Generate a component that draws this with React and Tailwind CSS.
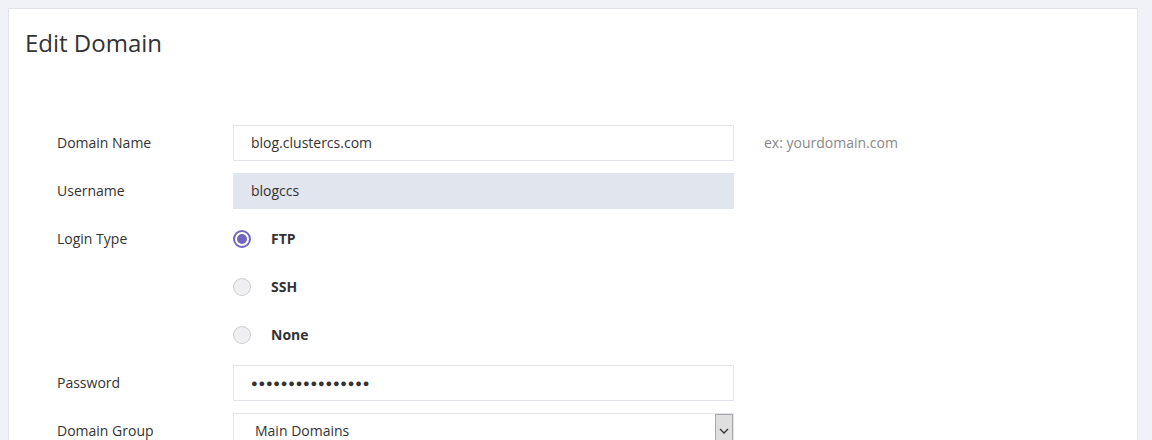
import React from "react";

const font = { fontFamily: "'Open Sans', 'Noto Sans', sans-serif" };

function Row({ label, children, hint }) {
  return (
    <div className="flex items-center h-[36px] mb-[12px]">
      <div className="w-[176px] text-[14px] text-[#333] pb-px">{label}</div>
      {children}
      {hint && <div className="ml-[30px] text-[14px] text-[#888] pb-px">{hint}</div>}
    </div>
  );
}

function Radio({ checked, label }) {
  return (
    <div className="flex items-center">
      {checked ? (
        <span className="w-[18px] h-[18px] rounded-full border-2 border-[#7165bf] bg-white flex items-center justify-center">
          <span className="w-[10px] h-[10px] rounded-full bg-[#7165bf]" />
        </span>
      ) : (
        <span className="w-[18px] h-[18px] rounded-full border border-[#cfcfcf] bg-[#efeff1]" />
      )}
      <span className="ml-[20px] text-[14px] font-bold text-[#333] pb-px">{label}</span>
    </div>
  );
}

export default function App() {
  return (
    <div style={font} className="min-h-screen bg-[#f1f2f7] pl-2 pr-[14px] pt-2 overflow-hidden h-[440px]">
      <div className="bg-white border border-[#e3e4ee] min-h-[600px]">
        <h1 className="pl-4 pt-[18px] text-[24px] leading-[32px] text-[#333] font-normal">Edit Domain</h1>
        <div className="pl-[48px] mt-[66px]">
          <Row label="Domain Name" hint="ex: yourdomain.com">
            <div className="w-[501px] h-[36px] border border-[#e3e3ee] pl-[17px] pb-px flex items-center text-[14px] text-[#333]">
              blog.clustercs.com
            </div>
          </Row>
          <Row label="Username">
            <div className="w-[501px] h-[36px] bg-[#e1e5ee] pl-[18px] pb-px flex items-center text-[14px] text-[#333]">blogccs</div>
          </Row>
          <Row label="Login Type">
            <Radio checked label="FTP" />
          </Row>
          <Row label="">
            <Radio label="SSH" />
          </Row>
          <Row label="">
            <Radio label="None" />
          </Row>
          <Row label="Password">
            <div className="w-[501px] h-[36px] border border-[#e3e3ee] pl-[17px] flex items-center text-[11px] tracking-[0.8px] text-[#333]">
              ●●●●●●●●●●●●●●●●
            </div>
          </Row>
          <Row label="Domain Group">
            <div className="w-[501px] h-[36px] border border-[#e3e3ee] flex">
              <div className="flex-1 pl-[21px] pb-px flex items-center text-[14px] text-[#333]">Main Domains</div>
              <div className="w-[18px] h-full bg-[#dfdfdf] border border-[#a9a9a9] flex items-center justify-center">
                <svg width="10" height="6" viewBox="0 0 10 6" fill="none" stroke="#333" strokeWidth="1.3">
                  <path d="M1 1l4 4 4-4" />
                </svg>
              </div>
            </div>
          </Row>
        </div>
      </div>
    </div>
  );
}
